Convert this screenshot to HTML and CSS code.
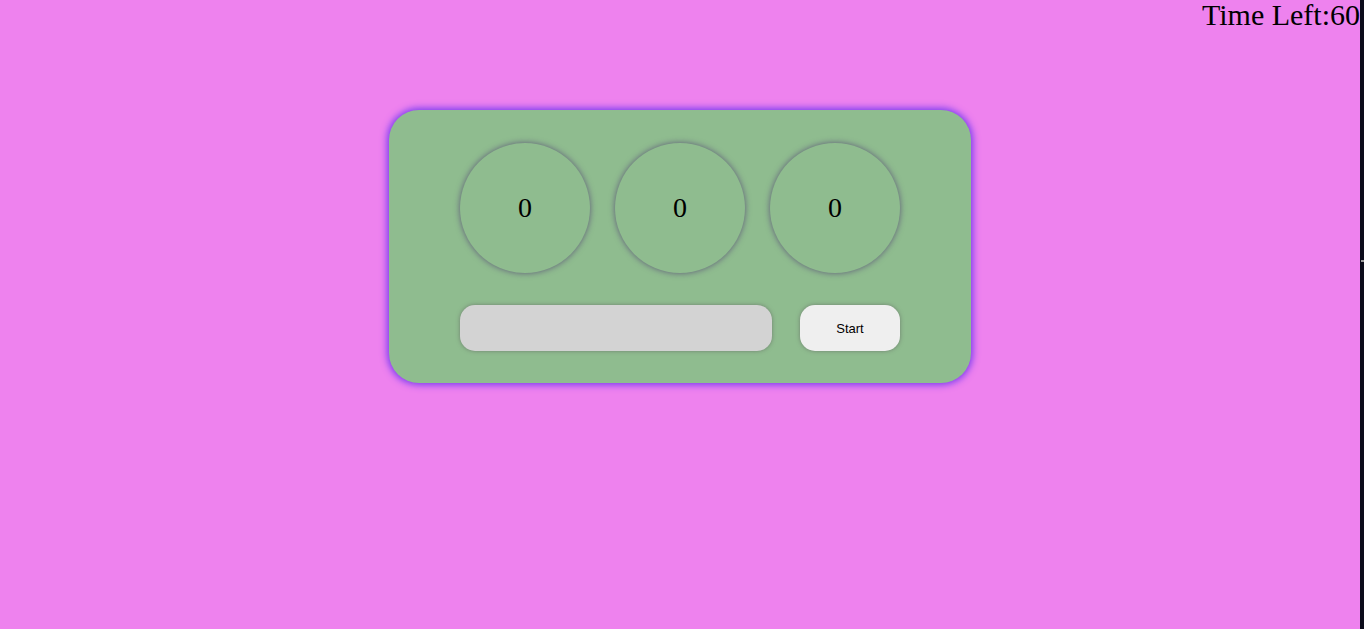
FILE: index.html
```html
<!DOCTYPE html>
<html>
<head>
<meta charset="utf-8">
<title>Game</title>
<link rel="stylesheet" href="styles.css">
</head>
<body>
<div class="page">
  <div class="timer">Time Left:60</div>
  <div class="card">
    <div class="circles">
      <div class="circle">0</div>
      <div class="circle">0</div>
      <div class="circle">0</div>
    </div>
    <div class="controls">
      <input class="answer" type="text">
      <button class="start">Start</button>
    </div>
  </div>
</div>
<div class="edge"><span class="tick"></span></div>
</body>
</html>
```
FILE: styles.css
```css
html, body {
  margin: 0;
  padding: 0;
  background: #ee82ee;
  height: 100%;
  overflow: hidden;
}
.page {
  width: 1360px;
  display: flex;
  flex-direction: column;
  align-items: center;
  font-family: "Liberation Serif", "Times New Roman", serif;
}
.timer {
  align-self: flex-end;
  font-size: 30px;
  line-height: 29px;
  color: #000;
  margin-top: 0;
}
.card {
  margin-top: 81px;
  width: 440px;
  padding: 33px 71px 32px;
  background: #8fbc8f;
  border-radius: 30px;
  box-shadow: 0 0 7px 2px #7a3cf0;
  display: flex;
  flex-direction: column;
  gap: 32px;
}
.circles {
  display: flex;
  gap: 25px;
}
.circle {
  width: 130px;
  height: 130px;
  border-radius: 50%;
  box-shadow: 0 0 6px #5e5a78;
  display: flex;
  align-items: center;
  justify-content: center;
  font-size: 28px;
  color: #000;
}
.controls {
  display: flex;
  gap: 28px;
}
.answer {
  width: 312px;
  height: 46px;
  box-sizing: border-box;
  border: none;
  border-radius: 15px;
  background: #d3d3d3;
  box-shadow: 0 0 4px #6f7f6f;
  outline: none;
  margin: 0;
}
.start {
  width: 100px;
  height: 46px;
  border: none;
  border-radius: 15px;
  background: #efefef;
  box-shadow: 0 0 4px #6f7f6f;
  font-family: "Liberation Sans", Arial, sans-serif;
  font-size: 13px;
  color: #000;
  margin: 0;
  padding: 0;
}
.edge {
  position: fixed;
  top: 0;
  right: 0;
  width: 4px;
  height: 100%;
  background: #0b0b1a;
}
.tick {
  position: absolute;
  top: 260px;
  left: 1px;
  width: 3px;
  height: 2px;
  background: #9a9a9a;
}
```
